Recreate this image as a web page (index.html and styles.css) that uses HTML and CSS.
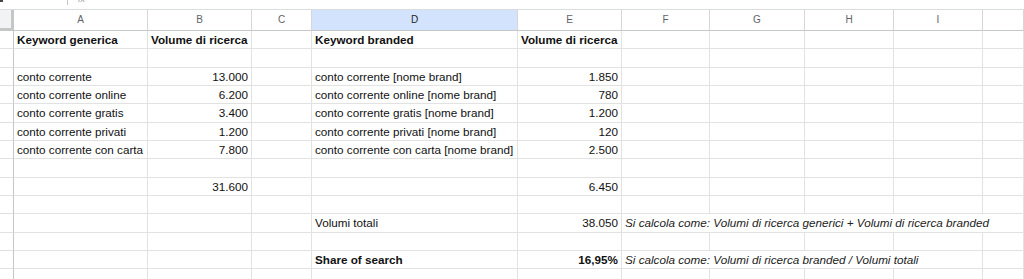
FILE: index.html
```html
<!DOCTYPE html>
<html lang="it">
<head>
<meta charset="utf-8">
<title>Share of search</title>
<link rel="stylesheet" href="styles.css">
</head>
<body>
<div class="topbar">
  <div class="namebox"><span class="caret"></span></div>
  <div class="sep"></div>
  <span class="fx">fx</span>
</div>
<div class="sheet">
  <div class="corner"></div>
  <div class="ch">A</div><div class="ch">B</div><div class="ch">C</div><div class="ch sel">D</div><div class="ch">E</div><div class="ch">F</div><div class="ch">G</div><div class="ch">H</div><div class="ch">I</div><div class="ch"></div>

  <div class="rh"></div>
  <div class="c b">Keyword generica</div><div class="c b">Volume di ricerca</div><div class="c"></div><div class="c b">Keyword branded</div><div class="c b">Volume di ricerca</div><div class="c"></div><div class="c"></div><div class="c"></div><div class="c"></div><div class="c"></div>

  <div class="rh"></div>
  <div class="c"></div><div class="c"></div><div class="c"></div><div class="c"></div><div class="c"></div><div class="c"></div><div class="c"></div><div class="c"></div><div class="c"></div><div class="c"></div>

  <div class="rh"></div>
  <div class="c">conto corrente</div><div class="c r">13.000</div><div class="c"></div><div class="c">conto corrente [nome brand]</div><div class="c r">1.850</div><div class="c"></div><div class="c"></div><div class="c"></div><div class="c"></div><div class="c"></div>

  <div class="rh"></div>
  <div class="c">conto corrente online</div><div class="c r">6.200</div><div class="c"></div><div class="c">conto corrente online [nome brand]</div><div class="c r">780</div><div class="c"></div><div class="c"></div><div class="c"></div><div class="c"></div><div class="c"></div>

  <div class="rh"></div>
  <div class="c">conto corrente gratis</div><div class="c r">3.400</div><div class="c"></div><div class="c">conto corrente gratis [nome brand]</div><div class="c r">1.200</div><div class="c"></div><div class="c"></div><div class="c"></div><div class="c"></div><div class="c"></div>

  <div class="rh"></div>
  <div class="c">conto corrente privati</div><div class="c r">1.200</div><div class="c"></div><div class="c">conto corrente privati [nome brand]</div><div class="c r">120</div><div class="c"></div><div class="c"></div><div class="c"></div><div class="c"></div><div class="c"></div>

  <div class="rh"></div>
  <div class="c">conto corrente con carta</div><div class="c r">7.800</div><div class="c"></div><div class="c">conto corrente con carta [nome brand]</div><div class="c r">2.500</div><div class="c"></div><div class="c"></div><div class="c"></div><div class="c"></div><div class="c"></div>

  <div class="rh"></div>
  <div class="c"></div><div class="c"></div><div class="c"></div><div class="c"></div><div class="c"></div><div class="c"></div><div class="c"></div><div class="c"></div><div class="c"></div><div class="c"></div>

  <div class="rh"></div>
  <div class="c"></div><div class="c r">31.600</div><div class="c"></div><div class="c"></div><div class="c r">6.450</div><div class="c"></div><div class="c"></div><div class="c"></div><div class="c"></div><div class="c"></div>

  <div class="rh"></div>
  <div class="c"></div><div class="c"></div><div class="c"></div><div class="c"></div><div class="c"></div><div class="c"></div><div class="c"></div><div class="c"></div><div class="c"></div><div class="c"></div>

  <div class="rh"></div>
  <div class="c"></div><div class="c"></div><div class="c"></div><div class="c">Volumi totali</div><div class="c r">38.050</div><div class="c i span5">Si calcola come: Volumi di ricerca generici + Volumi di ricerca branded</div>

  <div class="rh"></div>
  <div class="c"></div><div class="c"></div><div class="c"></div><div class="c"></div><div class="c"></div><div class="c"></div><div class="c"></div><div class="c"></div><div class="c"></div><div class="c"></div>

  <div class="rh"></div>
  <div class="c"></div><div class="c"></div><div class="c"></div><div class="c b">Share of search</div><div class="c r b">16,95%</div><div class="c i span4">Si calcola come: Volumi di ricerca branded / Volumi totali</div><div class="c"></div>

  <div class="rh"></div>
  <div class="c"></div><div class="c"></div><div class="c"></div><div class="c"></div><div class="c"></div><div class="c"></div><div class="c"></div><div class="c"></div><div class="c"></div><div class="c"></div>
</div>
</body>
</html>
```
FILE: styles.css
```css
* { box-sizing: border-box; }
html, body {
  margin: 0;
  padding: 0;
  background: #ffffff;
}
body {
  width: 1024px;
  height: 279px;
  overflow: hidden;
  font-family: "Liberation Sans", Arial, sans-serif;
}
.topbar {
  display: flex;
  align-items: flex-start;
  height: 10px;
  border-bottom: 1px solid #dadce0;
  overflow: hidden;
}
.namebox {
  width: 67px;
  height: 9px;
}
.caret {
  display: block;
  width: 3px;
  height: 2px;
  background: #444746;
}
.sep {
  width: 1px;
  height: 5px;
  background: #c4c7c5;
}
.fx {
  margin-left: 10px;
  margin-top: -5px;
  font-size: 9px;
  font-style: italic;
  line-height: 9px;
  color: #9aa0a6;
}
.sheet {
  display: grid;
  grid-template-columns: 14px 134px 104px 60px 206px 104px 88px 95px 89px 89px 1fr;
  grid-template-rows: 21px repeat(14, 18.333px);
}
.corner {
  background: #f1f3f4;
  border-right: 3px solid #c4c7c5;
  border-bottom: 3px solid #c4c7c5;
}
.ch {
  border-right: 1px solid #d6d6d6;
  border-bottom: 1px solid #c4c7c5;
  font-size: 10px;
  line-height: 20px;
  text-align: center;
  color: #5f6368;
  background: #ffffff;
}
.ch.sel {
  background: #d3e3fd;
  color: #1f1f1f;
}
.rh {
  border-right: 1px solid #c4c7c5;
  border-bottom: 1px solid #e1e1e1;
  background: #ffffff;
}
.c {
  border-right: 1px solid #e2e2e2;
  border-bottom: 1px solid #e2e2e2;
  padding: 0 3px;
  font-size: 11.7px;
  line-height: 17.5px;
  color: #111111;
  white-space: nowrap;
  overflow: hidden;
}
.r { text-align: right; }
.b { font-weight: bold; }
.i { font-style: italic; color: #222222; }
.span5 { grid-column: span 5; }
.span4 { grid-column: span 4; }
```
